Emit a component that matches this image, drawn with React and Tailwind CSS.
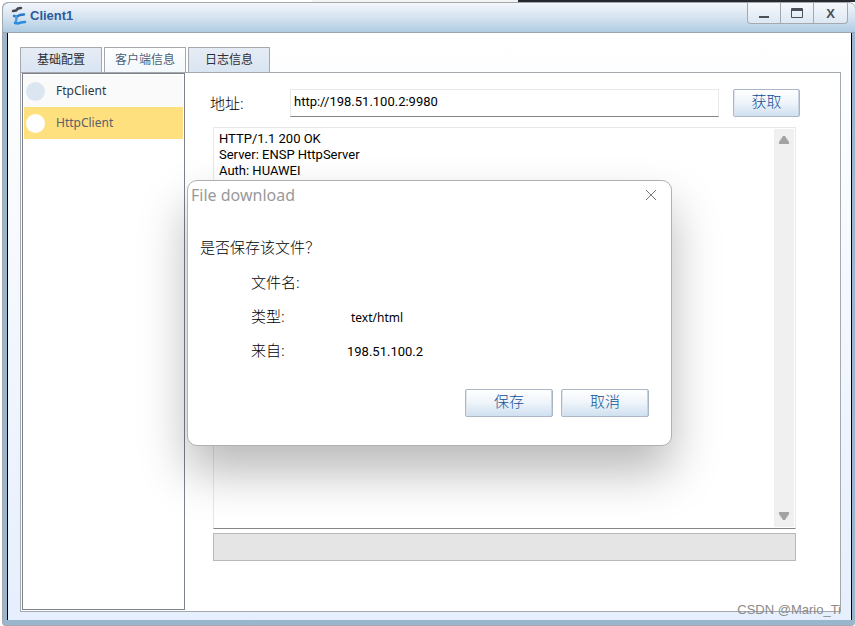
import React, { useState } from "react";

const tabs = ["基础配置", "客户端信息", "日志信息"];
const clients = ["FtpClient", "HttpClient"];
const response = `HTTP/1.1 200 OK
Server: ENSP HttpServer
Auth: HUAWEI`;

const Logo = () => (
  <svg viewBox="0 0 16 20" className="h-5 w-4 shrink-0" fill="none" strokeLinecap="round">
    <path d="M2 5L5 4.500L7 2.500L10 2" stroke="#46484f" strokeWidth="2.500" />
    <path d="M3 10L6 10.500L9 9L13 8.500" stroke="#2a78c8" strokeWidth="2.500" />
    <path d="M5 10.500L5.500 13L4.500 17" stroke="#4c9ce0" strokeWidth="2.500" />
    <path d="M4 17L7 17.500L10 16.500L14 16" stroke="#2a8be0" strokeWidth="2.500" />
  </svg>
);

const ActionButton = ({ children, className }) => (
  <button
    type="button"
    className={`h-7 rounded-xs border border-[#aab5c5] bg-linear-to-b from-white via-[#eef4f9] to-[#cfe0f0] pb-1 text-[15px] leading-5 font-light text-[#0f4f96] shadow-[inset_1px_0_#dfe6ef,inset_-1px_0_#c9d2e0] ${className}`}
  >
    {children}
  </button>
);

const DownloadDialog = () => (
  <div
    role="dialog"
    aria-labelledby="dialog-title"
    className="absolute top-[180px] left-[187px] h-[266px] w-[485px] rounded-[10px] border border-[#b0b0b0] bg-white shadow-[0_26px_48px_0_rgba(0,0,0,0.28)]"
  >
    <div className="flex h-7 items-center justify-between pr-3 pl-[3px]">
      <h2 id="dialog-title" className="text-base text-[#999]">
        File download
      </h2>
      <button type="button" aria-label="Close" className="flex size-4 items-center justify-center">
        <svg viewBox="0 0 12 12" className="size-3" stroke="#777">
          <path d="M1 1L11 11M11 1L1 11" />
        </svg>
      </button>
    </div>
    <p className="mt-6 pl-3 text-[15px] leading-7 font-light">是否保存该文件？</p>
    <dl className="mt-[6px] grid auto-rows-[34px] grid-cols-[96px_1fr] pl-[63px]">
      <dt className="text-[15px] leading-[30px] font-light">文件名:</dt>
      <dd></dd>
      <dt className="text-[15px] leading-[30px] font-light">类型:</dt>
      <dd className="pl-1 text-xs leading-[34px]">text/html</dd>
      <dt className="text-[15px] leading-[30px] font-light">来自:</dt>
      <dd className="font-[Roboto,sans-serif] text-[13px] leading-[34px]">198.51.100.2</dd>
    </dl>
    <div className="mt-5 flex justify-end gap-2 pr-[22px]">
      <ActionButton className="w-[88px]">保存</ActionButton>
      <ActionButton className="w-[88px]">取消</ActionButton>
    </div>
  </div>
);

const App = () => {
  const [activeTab, setActiveTab] = useState("客户端信息");
  const [activeClient, setActiveClient] = useState("HttpClient");
  const [address, setAddress] = useState("http://198.51.100.2:9980");

  return (
    <div className="relative flex h-screen flex-col overflow-hidden bg-white font-['Noto_Sans','Noto_Sans_CJK_SC',sans-serif] text-black">
      {/* window behind */}
      <div className="ml-[312px] flex h-[2px] shrink-0">
        <div className="w-[206px] bg-[#f3f3f3]"></div>
        <div className="flex-1 bg-[#272930]"></div>
      </div>

      <div className="ml-[2px] flex min-h-0 flex-1 flex-col rounded-t-md rounded-b-sm border border-r-0 border-[#a5a9ad] bg-[#9ab6cd]">
        {/* title bar */}
        <header className="flex h-[30px] shrink-0 items-start justify-between rounded-t-md border-b border-[#9aa6b2] bg-linear-to-b from-[#f3f6fb] via-[#d5e3f1] to-[#afcbe2] pr-[7px] pl-2">
          <div className="flex items-center gap-[3px] pt-[3px]">
            <Logo />
            <h1 className="font-['Liberation_Sans',sans-serif] text-[13px] leading-5 font-bold text-[#2b5c9b]">
              Client1
            </h1>
          </div>
          <div className="flex h-[21px] divide-x divide-[#a5a9ad] rounded-b-sm border border-t-0 border-[#a5a9ad] bg-linear-to-b from-[#f5f8fc] to-[#dce8f3]">
            <button type="button" aria-label="Minimize" className="flex w-[33px] items-center justify-center">
              <svg viewBox="0 0 12 12" className="size-3">
                <path d="M1 10H11" stroke="#4b4f57" strokeWidth="2" />
              </svg>
            </button>
            <button type="button" aria-label="Maximize" className="flex w-[33px] items-center justify-center">
              <svg viewBox="0 0 12 12" className="size-3" fill="none" stroke="#4b4f57">
                <path d="M0.500 1.500H11.500V10.500H0.500ZM0 2.500H12M0 3.500H12" />
              </svg>
            </button>
            <button
              type="button"
              aria-label="Close window"
              className="w-[33px] pt-px font-['Liberation_Sans',sans-serif] text-[13px] leading-5 font-bold text-[#4b4f57]"
            >
              X
            </button>
          </div>
        </header>

        <div className="mr-[3px] mb-[5px] ml-1 flex min-h-0 flex-1 flex-col border-x border-black bg-linear-to-b from-white to-[#e6effe] pt-[14px] pr-[10px] pb-2 pl-3">
          {/* tabs */}
          <nav className="flex h-[25px] shrink-0 gap-[2px]">
            {tabs.map((tab) => (
              <button
                key={tab}
                type="button"
                onClick={() => setActiveTab(tab)}
                className={`w-[82px] border border-b-0 border-[#a5a9ad] text-xs ${
                  activeTab === tab
                    ? "bg-linear-to-b from-white to-[#f3f8fd] text-[#4c5f78]"
                    : "bg-linear-to-b from-[#e6ecf5] to-[#d9e5f2] text-[#2b2f38]"
                }`}
              >
                {tab}
              </button>
            ))}
          </nav>

          <main className="flex min-h-0 flex-1 border border-[#a5a9ad] bg-white">
            {/* client list */}
            <ul className="m-px mt-0 w-[163px] shrink-0 border border-[#7b828c] p-px">
              {clients.map((client) => (
                <li key={client}>
                  <button
                    type="button"
                    onClick={() => setActiveClient(client)}
                    className={`flex h-8 w-full items-center gap-[11px] pl-[2px] text-xs leading-8 ${
                      activeClient === client ? "bg-[#ffe07f] text-[#596068]" : "bg-[#fafafa] text-[#333840]"
                    }`}
                  >
                    <span
                      className={`size-[19px] rounded-full ${
                        activeClient === client ? "bg-white" : "bg-[#dce6f1]"
                      }`}
                    ></span>
                    {client}
                  </button>
                </li>
              ))}
            </ul>

            <section className="flex min-w-0 flex-1 flex-col pt-4 pr-[44px] pb-[50px] pl-[27px]">
              <div className="-mr-1 flex h-7 shrink-0 items-center">
                <label htmlFor="address" className="-ml-[3px] w-20 shrink-0 text-[15px] leading-7 font-light">
                  地址:
                </label>
                <input
                  id="address"
                  type="text"
                  value={address}
                  onChange={(e) => setAddress(e.target.value)}
                  className="h-7 min-w-0 flex-1 border border-[#e8e8e8] border-b-[#858585] px-[3px] pb-1 font-[Roboto,sans-serif] text-[13px] outline-none"
                />
                <ActionButton className="ml-[14px] w-[67px] shrink-0">获取</ActionButton>
              </div>

              <div className="mt-[10px] flex min-h-0 flex-1 border border-[#e8e8e8] border-b-[#858585]">
                <textarea
                  aria-label="Response"
                  readOnly
                  value={response}
                  className="min-w-0 flex-1 resize-none px-[5px] py-[3px] font-[Roboto,sans-serif] text-[13px] leading-4 outline-none"
                ></textarea>
                <div className="my-px mr-px flex w-5 flex-col items-center justify-between bg-[#f0f0f0] py-[7px]">
                  <svg viewBox="0 0 10 8" className="h-2 w-[10px]" fill="#a3a3a3">
                    <path d="M4 0H6L10 6V8H0V6Z" />
                  </svg>
                  <svg viewBox="0 0 10 8" className="h-2 w-[10px]" fill="#a3a3a3">
                    <path d="M4 8H6L10 2V0H0V2Z" />
                  </svg>
                </div>
              </div>
              <div className="mt-1 h-7 shrink-0 border border-[#b8b8b8] bg-[#e5e5e5]"></div>
            </section>
          </main>
        </div>
      </div>

      <DownloadDialog />

      <span className="absolute right-[14px] bottom-[6px] font-['Liberation_Sans',sans-serif] text-[13px] leading-5 text-[#8b8b8b]">
        CSDN @Mario_Ti
      </span>
    </div>
  );
};

export default App;
